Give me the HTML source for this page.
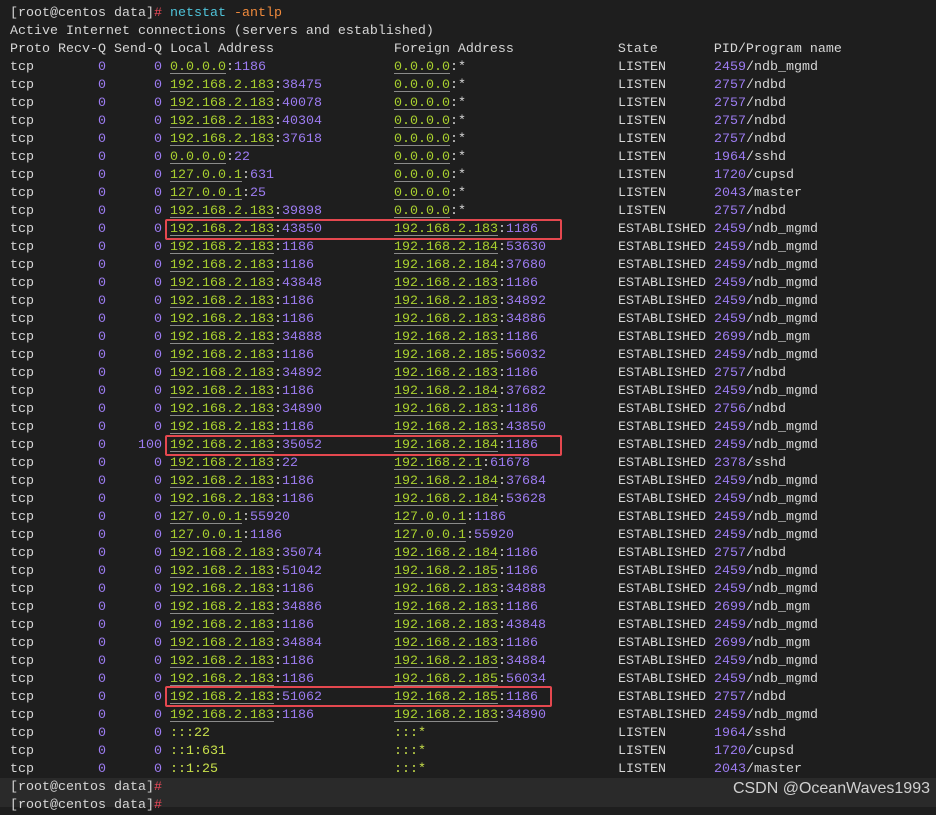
<!DOCTYPE html>
<html><head><meta charset="utf-8"><style>
html,body{margin:0;padding:0;background:#1e1e1e;}
body{width:936px;height:807px;overflow:hidden;position:relative;font-family:"Liberation Mono",monospace;font-size:13.33px;color:#d6d6d6;}
#t{position:absolute;left:10px;top:5px;}
.r{height:18px;line-height:18px;white-space:pre;}
.r span{display:inline-block;white-space:pre;}
.a{width:88px}.b{width:8px}.c{width:64px;text-align:right}
.l{width:224px}.f{width:224px}.s{width:96px}
.p{color:#9d7cf2}
.g{color:#a9d02f;text-decoration:underline;text-decoration-color:#8a8a8a;text-underline-offset:3px}
.y{color:#c8e04a}
.cy{color:#4fc3d9}.or{color:#f08a3c}.rd{color:#ee4a5a}
.box{position:absolute;border:2px solid #e5484f;border-radius:2px;}
#bot{position:absolute;left:0;top:778px;width:936px;height:29px;background:#2a2a2a;}
#wm{position:absolute;right:6px;top:780px;font-family:"Liberation Sans",sans-serif;font-size:16px;color:#d0d0d0;}
</style></head><body>
<div id="bot"></div>
<div id="t">
<div class="r">[root@centos data]<span class="rd">#</span> <span class="cy">netstat</span> <span class="or">-antlp</span></div>
<div class="r">Active Internet connections (servers and established)</div>
<div class="r">Proto Recv-Q Send-Q Local Address               Foreign Address             State       PID/Program name</div>
<div class="r"><span class="a">tcp</span><span class="b p">0</span><span class="c p">0 </span><span class="l"><u class="g">0.0.0.0</u>:<i class="p" style="font-style:normal">1186</i></span><span class="f"><u class="g">0.0.0.0</u>:*</span><span class="s">LISTEN</span><b class="p" style="font-weight:normal">2459</b>/ndb_mgmd</div>
</div>
<script>
var rows=[
["192.168.2.183","38475","0.0.0.0","*","LISTEN","2757","ndbd"],
["192.168.2.183","40078","0.0.0.0","*","LISTEN","2757","ndbd"],
["192.168.2.183","40304","0.0.0.0","*","LISTEN","2757","ndbd"],
["192.168.2.183","37618","0.0.0.0","*","LISTEN","2757","ndbd"],
["0.0.0.0","22","0.0.0.0","*","LISTEN","1964","sshd"],
["127.0.0.1","631","0.0.0.0","*","LISTEN","1720","cupsd"],
["127.0.0.1","25","0.0.0.0","*","LISTEN","2043","master"],
["192.168.2.183","39898","0.0.0.0","*","LISTEN","2757","ndbd"],
["192.168.2.183","43850","192.168.2.183","1186","ESTABLISHED","2459","ndb_mgmd"],
["192.168.2.183","1186","192.168.2.184","53630","ESTABLISHED","2459","ndb_mgmd"],
["192.168.2.183","1186","192.168.2.184","37680","ESTABLISHED","2459","ndb_mgmd"],
["192.168.2.183","43848","192.168.2.183","1186","ESTABLISHED","2459","ndb_mgmd"],
["192.168.2.183","1186","192.168.2.183","34892","ESTABLISHED","2459","ndb_mgmd"],
["192.168.2.183","1186","192.168.2.183","34886","ESTABLISHED","2459","ndb_mgmd"],
["192.168.2.183","34888","192.168.2.183","1186","ESTABLISHED","2699","ndb_mgm"],
["192.168.2.183","1186","192.168.2.185","56032","ESTABLISHED","2459","ndb_mgmd"],
["192.168.2.183","34892","192.168.2.183","1186","ESTABLISHED","2757","ndbd"],
["192.168.2.183","1186","192.168.2.184","37682","ESTABLISHED","2459","ndb_mgmd"],
["192.168.2.183","34890","192.168.2.183","1186","ESTABLISHED","2756","ndbd"],
["192.168.2.183","1186","192.168.2.183","43850","ESTABLISHED","2459","ndb_mgmd"],
["192.168.2.183","35052","192.168.2.184","1186","ESTABLISHED","2459","ndb_mgmd","100"],
["192.168.2.183","22","192.168.2.1","61678","ESTABLISHED","2378","sshd"],
["192.168.2.183","1186","192.168.2.184","37684","ESTABLISHED","2459","ndb_mgmd"],
["192.168.2.183","1186","192.168.2.184","53628","ESTABLISHED","2459","ndb_mgmd"],
["127.0.0.1","55920","127.0.0.1","1186","ESTABLISHED","2459","ndb_mgmd"],
["127.0.0.1","1186","127.0.0.1","55920","ESTABLISHED","2459","ndb_mgmd"],
["192.168.2.183","35074","192.168.2.184","1186","ESTABLISHED","2757","ndbd"],
["192.168.2.183","51042","192.168.2.185","1186","ESTABLISHED","2459","ndb_mgmd"],
["192.168.2.183","1186","192.168.2.183","34888","ESTABLISHED","2459","ndb_mgmd"],
["192.168.2.183","34886","192.168.2.183","1186","ESTABLISHED","2699","ndb_mgm"],
["192.168.2.183","1186","192.168.2.183","43848","ESTABLISHED","2459","ndb_mgmd"],
["192.168.2.183","34884","192.168.2.183","1186","ESTABLISHED","2699","ndb_mgm"],
["192.168.2.183","1186","192.168.2.183","34884","ESTABLISHED","2459","ndb_mgmd"],
["192.168.2.183","1186","192.168.2.185","56034","ESTABLISHED","2459","ndb_mgmd"],
["192.168.2.183","51062","192.168.2.185","1186","ESTABLISHED","2757","ndbd"],
["192.168.2.183","1186","192.168.2.183","34890","ESTABLISHED","2459","ndb_mgmd"],
["::","22","::","*","LISTEN","1964","sshd"],
["::1","631","::","*","LISTEN","1720","cupsd"],
["::1","25","::","*","LISTEN","2043","master"]
];
var h="";
function addr(ip,port){
  if(ip=="::"||ip=="::1"){
    if(port=="*")return '<i class="y" style="font-style:normal">:::*</i>';
    return '<i class="y" style="font-style:normal">'+ip+':'+port+'</i>';
  }
  if(port=="*")return '<u class="g">'+ip+'</u>:*';
  return '<u class="g">'+ip+'</u>:<i class="p" style="font-style:normal">'+port+'</i>';
}
rows.forEach(function(r){
  h+='<div class="r"><span class="a">tcp</span><span class="b p">0</span><span class="c p">'+(r[7]||"0")+' </span><span class="l">'+addr(r[0],r[1])+'</span><span class="f">'+addr(r[2],r[3])+'</span><span class="s">'+r[4]+'</span><b class="p" style="font-weight:normal">'+r[5]+'</b>/'+r[6]+'</div>';
});
h+='<div class="r">[root@centos data]<span class="rd">#</span></div>';
h+='<div class="r">[root@centos data]<span class="rd">#</span></div>';
document.getElementById("t").insertAdjacentHTML("beforeend",h);
</script>
<div class="box" style="left:165px;top:219px;width:393px;height:17px"></div>
<div class="box" style="left:165px;top:435px;width:393px;height:17px"></div>
<div class="box" style="left:165px;top:686px;width:383px;height:17px"></div>
<div id="wm">CSDN @OceanWaves1993</div>
</body></html>
